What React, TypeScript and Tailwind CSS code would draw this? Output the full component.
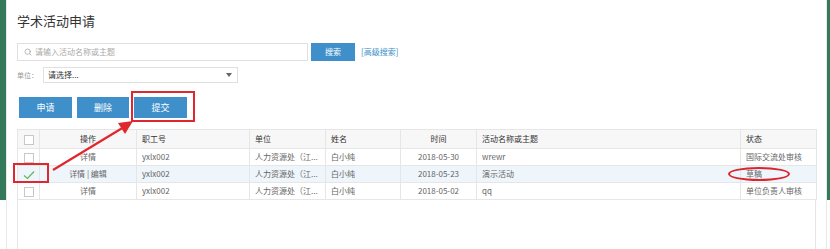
import { Search } from "lucide-react";

type Row = {
  ops: "detail" | "both";
  checked: boolean;
  no: string;
  unit: string;
  name: string;
  date: string;
  title: string;
  status: string;
};

const rows: Row[] = [
  { ops: "detail", checked: false, no: "yxlx002", unit: "人力资源处（江...", name: "白小纯", date: "2018-05-30", title: "wrewr", status: "国际交流处审核" },
  { ops: "both", checked: true, no: "yxlx002", unit: "人力资源处（江...", name: "白小纯", date: "2018-05-23", title: "演示活动", status: "草稿" },
  { ops: "detail", checked: false, no: "yxlx002", unit: "人力资源处（江...", name: "白小纯", date: "2018-05-02", title: "qq", status: "单位负责人审核" },
];

function Box() {
  return <span className="inline-block w-[10px] h-[10px] border border-[#c8c8c8] bg-white align-middle" />;
}

function Check() {
  return (
    <svg width="12" height="10" viewBox="0 0 12 10" className="inline-block align-middle">
      <path d="M1 5.5 L4.5 8.5 L11 1.5" fill="none" stroke="#5cb85c" strokeWidth="1.2" />
    </svg>
  );
}

export default function App() {
  const th = "h-[19px] border border-[#e6e6e6] font-normal text-[#333] text-[8px] px-[5px]";
  const td = "h-[17px] border border-[#e6e6e6] text-[#666] text-[8px] px-[5px]";
  return (
    <div className="relative w-[830px] h-[249px] overflow-hidden bg-white flex font-['Noto_Sans_CJK_SC',sans-serif]">
      <div className="w-[7px] h-full border-r border-[#e8e8e8]">
        <div className="w-[6px] h-[200px] bg-[#33795a]" />
      </div>

      <div className="flex-1 flex flex-col pl-[10px] pr-[10px]">
        <h1 className="pt-[13px] h-[43px] text-[13px] leading-[16px] text-[#333]">学术活动申请</h1>

        <div className="flex items-center h-[18px]">
          <div className="w-[291px] h-[18px] border border-[#e0e0e0] flex items-center pl-[6px] gap-[3px]">
            <Search size={8} color="#999" strokeWidth={2} />
            <span className="text-[8px] text-[#aaa]">请输入活动名称或主题</span>
          </div>
          <button className="ml-[3px] w-[44px] h-[18px] bg-[#3e8fca] text-white text-[8px]">搜索</button>
          <a className="ml-[6px] text-[8px] text-[#3a8fc8]">[高级搜索]</a>
        </div>

        <div className="flex items-center mt-[6px] h-[16px]">
          <span className="w-[26px] text-[7px] text-[#999]">单位：</span>
          <div className="w-[195px] h-[16px] border border-[#e0e0e0] flex items-center justify-between pl-[4px] pr-[5px]">
            <span className="text-[8px] text-[#333]">请选择...</span>
            <span className="w-0 h-0 border-l-[3px] border-r-[3px] border-t-[4px] border-l-transparent border-r-transparent border-t-[#666]" />
          </div>
        </div>

        <div className="flex mt-[14px] ml-[2px] gap-[5px] h-[21px]">
          <button className="w-[53px] h-[21px] bg-[#3e8fca] text-white text-[9px]">申请</button>
          <button className="w-[52px] h-[21px] bg-[#3e8fca] text-white text-[9px]">删除</button>
          <button className="w-[53px] h-[21px] bg-[#3e8fca] text-white text-[9px]">提交</button>
        </div>

        <div className="mt-[11px] flex-1 w-[799px] border-x border-t border-[#e6e6e6]">
          <table className="table-fixed border-collapse w-[799px] -mt-px -ml-px">
            <colgroup>
              <col className="w-[22px]" />
              <col className="w-[97px]" />
              <col className="w-[113px]" />
              <col className="w-[76px]" />
              <col className="w-[75px]" />
              <col className="w-[76px]" />
              <col className="w-[264px]" />
              <col className="w-[76px]" />
            </colgroup>
            <thead>
              <tr className="bg-[#f7f7f7]">
                <th className={th + " text-center px-0"}><Box /></th>
                <th className={th + " text-center"}>操作</th>
                <th className={th + " text-left"}>职工号</th>
                <th className={th + " text-left"}>单位</th>
                <th className={th + " text-left"}>姓名</th>
                <th className={th + " text-center"}>时间</th>
                <th className={th + " text-left"}>活动名称或主题</th>
                <th className={th + " text-left"}>状态</th>
              </tr>
            </thead>
            <tbody>
              {rows.map((r, i) => (
                <tr key={i} className={r.checked ? "bg-[#eef5fb]" : "bg-white"}>
                  <td className={td + " text-center px-0"}>{r.checked ? <Check /> : <Box />}</td>
                  <td className={td + " text-center text-[#3a8fc8]"}>
                    {r.ops === "both" ? "详情 | 编辑" : "详情"}
                  </td>
                  <td className={td}>{r.no}</td>
                  <td className={td + " whitespace-nowrap overflow-hidden"}>{r.unit}</td>
                  <td className={td}>{r.name}</td>
                  <td className={td + " text-center"}>{r.date}</td>
                  <td className={td}>{r.title}</td>
                  <td className={td + " whitespace-nowrap"}>{r.status}</td>
                </tr>
              ))}
            </tbody>
          </table>
        </div>
      </div>

      <div className="w-[4px] h-full border-l border-[#e8e8e8]">
        <div className="w-[3px] h-[200px] bg-[#33795a]" />
      </div>

      {/* annotations */}
      <div className="absolute left-[131px] top-[91px] w-[64px] h-[31px] border-2 border-[#e0262e]" />
      <div className="absolute left-[13px] top-[163px] w-[36px] h-[20px] border-2 border-[#e0262e]" />
      <div className="absolute left-[728px] top-[167px] w-[62px] h-[14px] border-2 border-[#d9262c] rounded-[50%]" />
      <svg className="absolute left-0 top-0" width="830" height="249">
        <line x1="53" y1="170" x2="124" y2="127" stroke="#e0262e" strokeWidth="2.2" />
        <polygon points="133,121 118,123 125,134" fill="#e0262e" />
      </svg>
    </div>
  );
}
